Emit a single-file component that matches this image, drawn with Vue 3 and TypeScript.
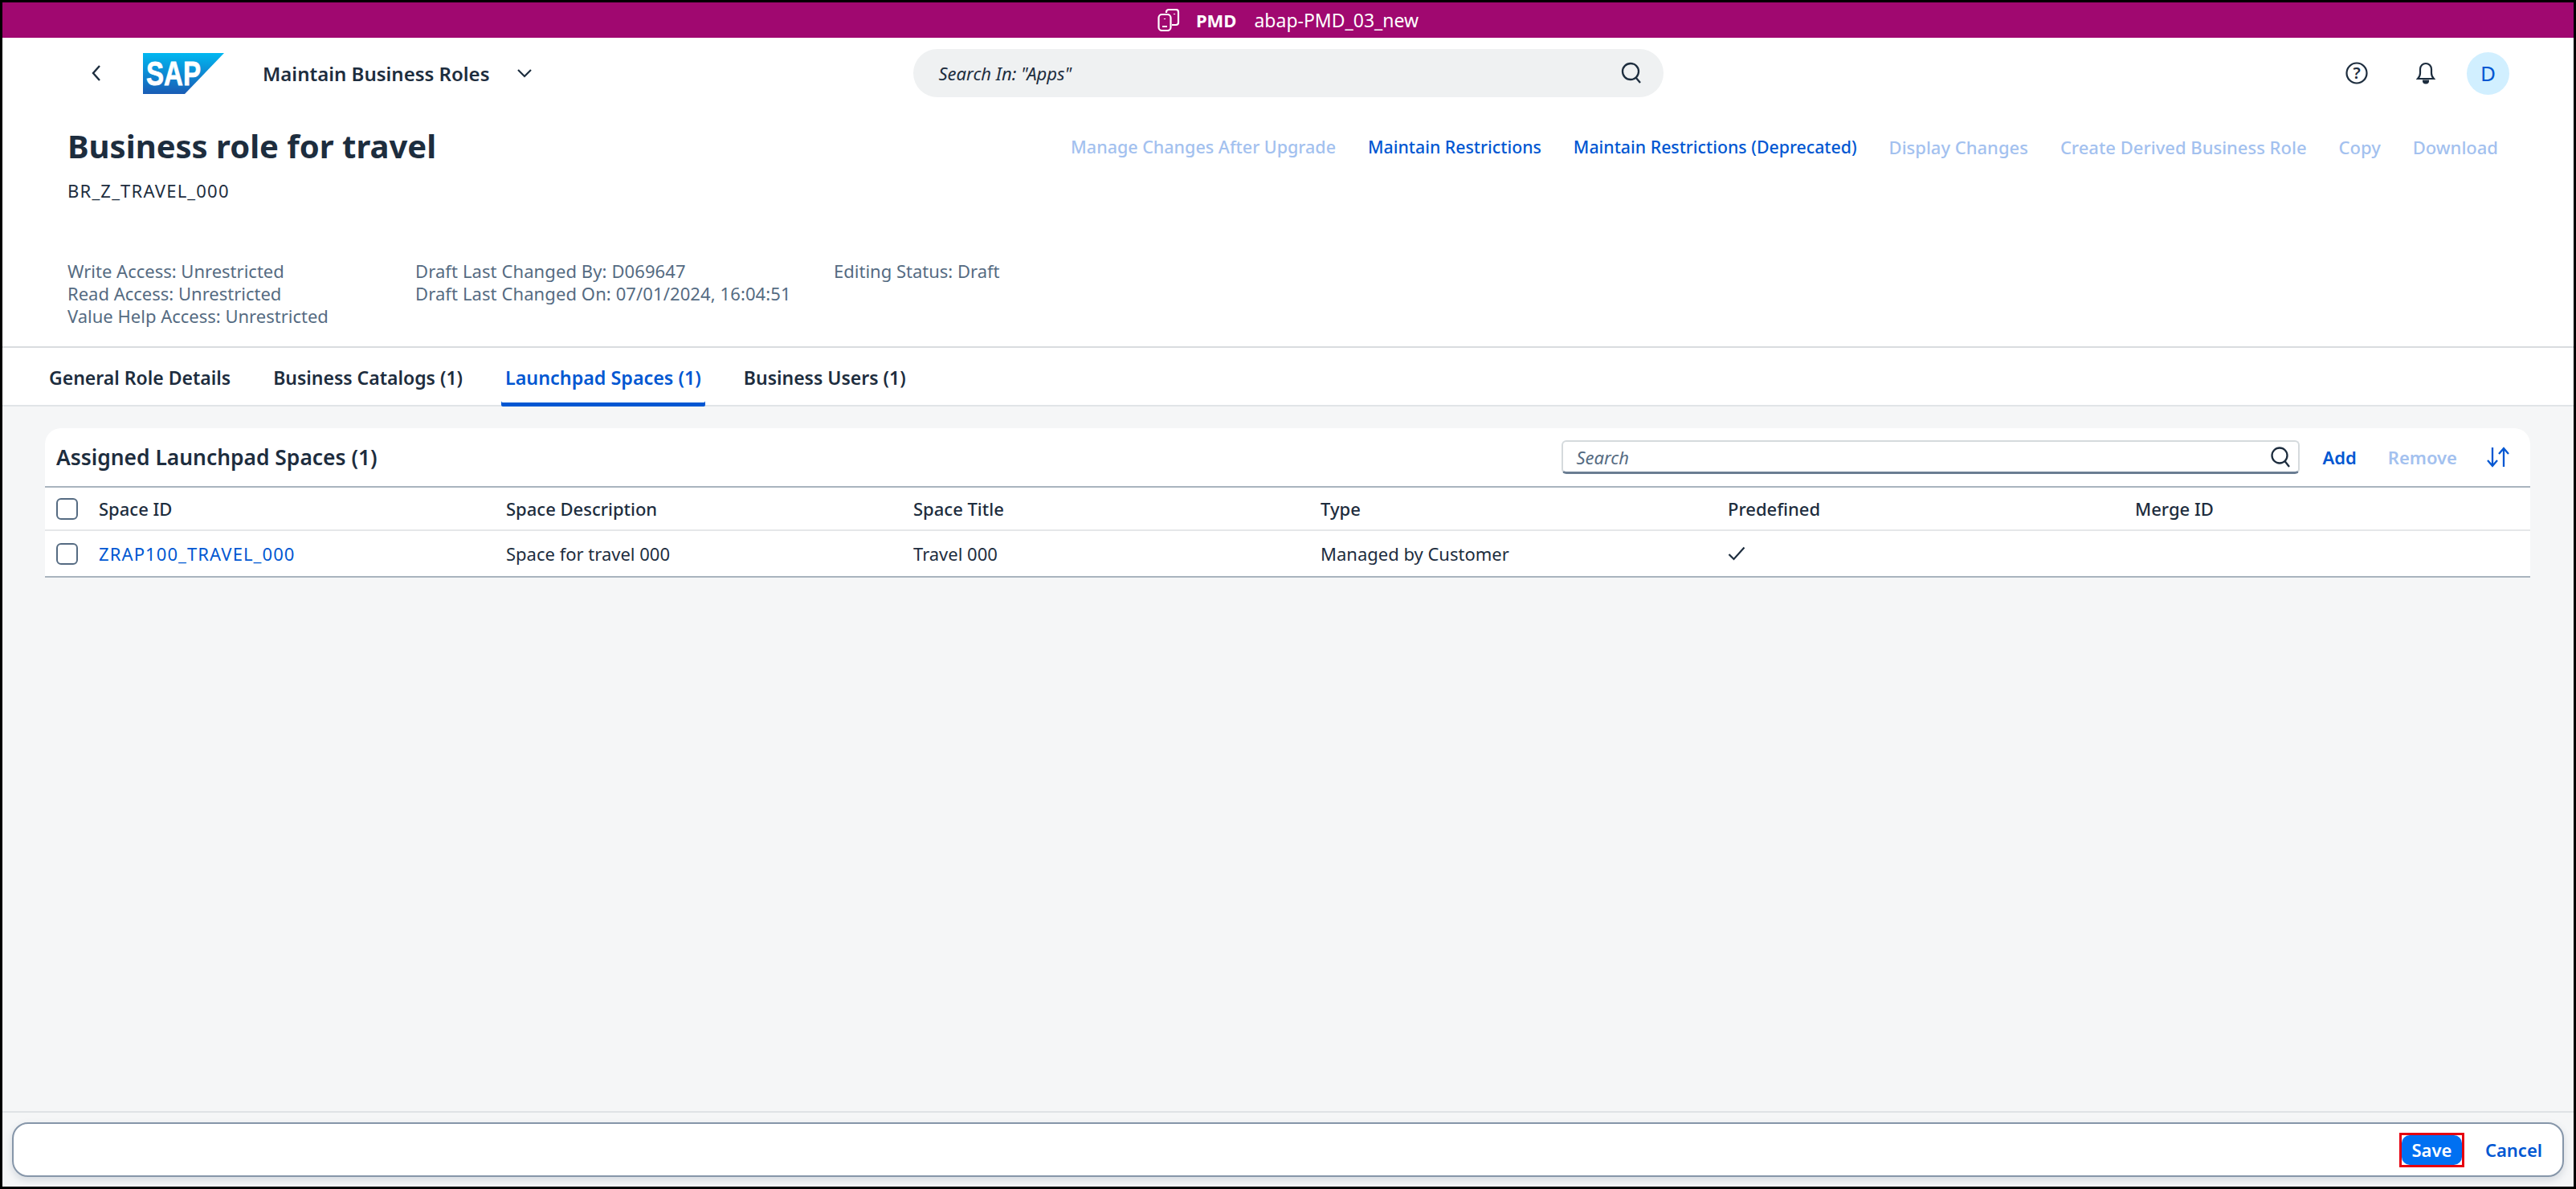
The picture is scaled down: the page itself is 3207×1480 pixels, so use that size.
<script setup lang="ts">
const leftActions = [
  { label: 'Manage Changes After Upgrade', off: true },
  { label: 'Maintain Restrictions', off: false },
  { label: 'Maintain Restrictions (Deprecated)', off: false },
  { label: 'Display Changes', off: true },
  { label: 'Create Derived Business Role', off: true },
  { label: 'Copy', off: true },
  { label: 'Download', off: true },
]
const tabs = ['General Role Details', 'Business Catalogs (1)', 'Launchpad Spaces (1)', 'Business Users (1)']
const columns = ['Space ID', 'Space Description', 'Space Title', 'Type', 'Predefined', 'Merge ID']
</script>

<template>
  <div class="frame">
    <div class="topbar">
      <svg class="device" viewBox="0 0 28 28" width="28" height="28" fill="none" stroke="#fff" stroke-width="2.2">
        <rect x="1.5" y="7" width="15" height="20" rx="4" fill="#a00870" />
        <path d="M11 5V4a3 3 0 0 1 3-3h9a3 3 0 0 1 3 3v13a3 3 0 0 1-3 3h-5" />
        <path d="M6 22h6M21 6v1M9 12v1" />
      </svg>
      <b>PMD</b>
      <span>abap-PMD_03_new</span>
    </div>

    <header class="head">
      <div class="shell">
        <div class="shell-left">
          <svg class="back" viewBox="0 0 14 22" width="14" height="22" fill="none" stroke="#1d2d3e" stroke-width="2.4">
            <path d="M11 2 3 11l8 9" />
          </svg>
          <svg class="logo" viewBox="0 0 101 51" width="101" height="51">
            <defs>
              <linearGradient id="sapfill" x1="0" y1="0" x2="0" y2="1">
                <stop offset="0" stop-color="#00b8f1" />
                <stop offset="1" stop-color="#1a5cb5" />
              </linearGradient>
            </defs>
            <polygon points="0,0 101,0 52,51 0,51" fill="url(#sapfill)" />
            <text x="4" y="40" class="logo-text" textLength="68" lengthAdjust="spacingAndGlyphs">SAP</text>
          </svg>
          <span class="app-title">Maintain Business Roles</span>
          <svg class="caret" viewBox="0 0 20 12" width="20" height="12" fill="none" stroke="#1d2d3e" stroke-width="2.2">
            <path d="M2 2l8 8 8-8" />
          </svg>
        </div>
        <div class="shell-search">
          <span>Search In: "Apps"</span>
          <svg viewBox="0 0 28 28" width="28" height="28" fill="none" stroke="#1d2d3e" stroke-width="2.3">
            <circle cx="13" cy="12" r="10" />
            <path d="M19.5 19.5 25 26" />
          </svg>
        </div>
        <div class="shell-right">
          <svg class="help" viewBox="0 0 28 28" width="28" height="28">
            <circle cx="14" cy="14" r="12.5" fill="none" stroke="#1d2d3e" stroke-width="2.2" />
            <text x="14" y="21" class="help-mark">?</text>
          </svg>
          <svg class="bell" viewBox="0 0 24 28" width="24" height="28" fill="none" stroke="#1d2d3e" stroke-width="2.2">
            <path d="M2 21c2-2 3-4 3-7V9a7 7 0 0 1 14 0v5c0 3 1 5 3 7z" />
            <path d="M9 23.500a3 3 0 0 0 6 0z" fill="#1d2d3e" />
          </svg>
          <div class="avatar">D</div>
        </div>
      </div>

      <div class="title-row">
        <h1>Business role for travel</h1>
        <div class="actions">
          <span v-for="a in leftActions" :key="a.label" :class="{ off: a.off }">{{ a.label }}</span>
        </div>
      </div>
      <div class="role-id">BR_Z_TRAVEL_000</div>
      <div class="meta">
        <div class="meta-one">
          <div>Write Access: Unrestricted</div>
          <div>Read Access: Unrestricted</div>
          <div>Value Help Access: Unrestricted</div>
        </div>
        <div class="meta-two">
          <div>Draft Last Changed By: D069647</div>
          <div>Draft Last Changed On: 07/01/2024, 16:04:51</div>
        </div>
        <div>Editing Status: Draft</div>
      </div>
    </header>

    <nav class="tabs">
      <div v-for="t in tabs" :key="t" class="tab" :class="{ active: t.startsWith('Launchpad') }">{{ t }}</div>
    </nav>

    <main class="content">
      <section class="card">
        <div class="card-head">
          <h2>Assigned Launchpad Spaces (1)</h2>
          <div class="tools">
            <div class="table-search">
              <span>Search</span>
              <svg viewBox="0 0 28 28" width="28" height="28" fill="none" stroke="#1d2d3e" stroke-width="2.3">
                <circle cx="13" cy="12" r="9.500" />
                <path d="M19.500 19 25 26" />
              </svg>
            </div>
            <span class="tool-link">Add</span>
            <span class="tool-link off">Remove</span>
            <svg class="sort" viewBox="0 0 28 26" width="28" height="26" fill="none" stroke="#0057d2" stroke-width="2.3">
              <path d="M7 1v23M1 17l6 7 6-7" />
              <path d="M21 25V2M15 9l6-7 6 7" />
            </svg>
          </div>
        </div>
        <div class="row header-row">
          <div class="box"></div>
          <div v-for="c in columns" :key="c">{{ c }}</div>
        </div>
        <div class="row data-row">
          <div class="box"></div>
          <div class="link">ZRAP100_TRAVEL_000</div>
          <div>Space for travel 000</div>
          <div>Travel 000</div>
          <div>Managed by Customer</div>
          <div>
            <svg class="check" viewBox="0 0 22 18" width="22" height="18" fill="none" stroke="#1d2d3e" stroke-width="2.2">
              <path d="M1.500 10l6 6L20.500 1.500" />
            </svg>
          </div>
          <div></div>
        </div>
      </section>
    </main>

    <footer class="footer">
      <div class="footer-bar">
        <div class="save-mark"><button class="save">Save</button></div>
        <span class="cancel">Cancel</span>
      </div>
    </footer>
  </div>
</template>

<style scoped>
.frame {
  height: 100vh;
  box-sizing: border-box;
  border: 3px solid #000;
  display: flex;
  flex-direction: column;
  background: #f5f6f7;
  color: #1d2d3e;
  font-family: "Noto Sans", sans-serif;
  font-size: 22px;
}

.topbar {
  height: 44px;
  flex: none;
  background: #a00870;
  color: #fff;
  display: flex;
  align-items: center;
  justify-content: center;
  font-size: 23px;
}
.topbar b {
  margin-left: 20px;
  font-weight: 700;
  font-size: 22px;
}
.topbar span {
  margin-left: 22px;
}

.head {
  background: #fff;
  flex: none;
  border-bottom: 2px solid #d9dcdf;
  padding-bottom: 24px;
}
.shell {
  height: 88px;
  display: grid;
  grid-template-columns: 1fr 934px 1fr;
  align-items: center;
}
.shell-left {
  display: flex;
  align-items: center;
  padding-left: 110px;
}
.logo {
  margin-left: 51px;
}
.logo-text {
  fill: #fff;
  stroke: #fff;
  stroke-width: 0.8;
  font-family: "Liberation Sans", sans-serif;
  font-weight: 700;
  font-size: 42px;
}
.app-title {
  margin-left: 48px;
  font-size: 24px;
  font-weight: 600;
}
.caret {
  margin-left: 34px;
}
.shell-search {
  height: 60px;
  box-sizing: border-box;
  border-radius: 30px;
  background: #eff1f2;
  padding: 0 26px 0 32px;
  display: flex;
  align-items: center;
  justify-content: space-between;
  font-style: italic;
}
.shell-right {
  display: flex;
  align-items: center;
  justify-content: flex-end;
  padding-right: 80px;
}
.help-mark {
  font-family: "Noto Sans", sans-serif;
  font-size: 20px;
  font-weight: 600;
  text-anchor: middle;
  fill: #1d2d3e;
}
.bell {
  margin-left: 60px;
}
.avatar {
  margin-left: 39px;
  width: 53px;
  height: 53px;
  border-radius: 50%;
  background: #d1efff;
  color: #0057d2;
  font-size: 26px;
  display: flex;
  align-items: center;
  justify-content: center;
}

.title-row {
  margin-top: 14px;
  height: 68px;
  display: flex;
  align-items: center;
  justify-content: space-between;
  padding: 0 94px 0 81px;
}
h1 {
  margin: 0 0 3px;
  font-size: 40px;
  font-weight: 700;
}
.actions {
  display: flex;
  gap: 40px;
  color: #0057d2;
  font-weight: 500;
  font-size: 21.5px;
}
.actions span:nth-child(2),
.actions span:nth-child(3) {
  font-size: 21.3px;
}
.actions span:nth-child(n + 4) {
  font-size: 22px;
}
.off {
  color: #a3c1ef;
}
.actions .off {
  color: #a3c1ef;
}
.role-id {
  margin: 6px 0 0 81px;
  line-height: 28px;
  letter-spacing: 1.2px;
}
.meta {
  margin: 72px 0 0 81px;
  display: flex;
  line-height: 28px;
  color: #556b82;
}
.meta-one {
  width: 433px;
}
.meta-two {
  width: 521px;
  letter-spacing: 0.1px;
}

.tabs {
  flex: none;
  height: 73px;
  box-sizing: border-box;
  background: #fff;
  border-bottom: 2px solid #e1e4e7;
  display: flex;
  gap: 43px;
  padding-left: 53px;
  font-weight: 600;
  font-size: 23px;
}
.tab {
  height: 73px;
  box-sizing: border-box;
  padding: 0 5px;
  display: flex;
  align-items: center;
}
.tab.active {
  color: #0057d2;
  font-size: 23.3px;
  box-shadow: inset 0 -5px #0057d2;
  border-radius: 0 0 2px 2px;
}

.content {
  flex: 1;
  padding: 27px 54px 0 53px;
}
.card {
  background: #fff;
  border-radius: 20px 20px 0 0;
}
.card-head {
  height: 72px;
  display: flex;
  align-items: center;
  justify-content: space-between;
  padding: 0 26px 0 14px;
}
h2 {
  margin: 0;
  font-size: 26.4px;
  font-weight: 600;
}
.tools {
  display: flex;
  align-items: center;
}
.table-search {
  width: 919px;
  height: 42px;
  box-sizing: border-box;
  border: 2px solid #d5dadd;
  border-bottom: 3px solid #6a7d92;
  border-radius: 6px;
  padding: 0 8px 0 16px;
  display: flex;
  align-items: center;
  justify-content: space-between;
  font-style: italic;
  color: #556b82;
}
.tool-link {
  color: #0057d2;
  font-weight: 600;
  margin-left: 28px;
}
.tool-link.off {
  color: #a3c1ef;
  margin-left: 39px;
}
.sort {
  margin-left: 37px;
}
.row {
  display: grid;
  grid-template-columns: 67px repeat(5, 507px) 1fr;
  align-items: center;
}
.header-row {
  height: 56px;
  box-sizing: border-box;
  border-top: 2px solid #a9b4be;
  border-bottom: 2px solid #e5e7e9;
  font-weight: 500;
}
.data-row {
  height: 58px;
  box-sizing: border-box;
  border-bottom: 2px solid #a9b4be;
}
.box {
  width: 27px;
  height: 27px;
  box-sizing: border-box;
  margin-left: 14px;
  border: 2px solid #556b82;
  border-radius: 6px;
}
.link {
  color: #0057d2;
  letter-spacing: 1.1px;
}
.check {
  display: block;
}

.footer {
  flex: none;
  height: 94px;
  box-sizing: border-box;
  border-top: 2px solid #dfe2e5;
  padding: 12px;
}
.footer-bar {
  height: 68px;
  box-sizing: border-box;
  background: #fff;
  border: 2px solid #8696a9;
  border-radius: 20px;
  box-shadow: 0 4px 10px rgba(85, 107, 130, 0.2);
  display: flex;
  align-items: center;
  justify-content: flex-end;
  padding-right: 25px;
}
.save-mark {
  width: 81px;
  height: 43px;
  box-sizing: border-box;
  border: 3px solid #e6000f;
  background: #fff;
  display: flex;
}
.save {
  flex: 1;
  border: 0;
  padding: 0;
  border-radius: 10px;
  background: #0070f2;
  color: #fff;
  font: 600 22px "Noto Sans", sans-serif;
}
.cancel {
  margin-left: 26px;
  color: #0057d2;
  font-weight: 600;
}
</style>

<style>
html,
body {
  margin: 0;
  overflow: hidden;
}
</style>
